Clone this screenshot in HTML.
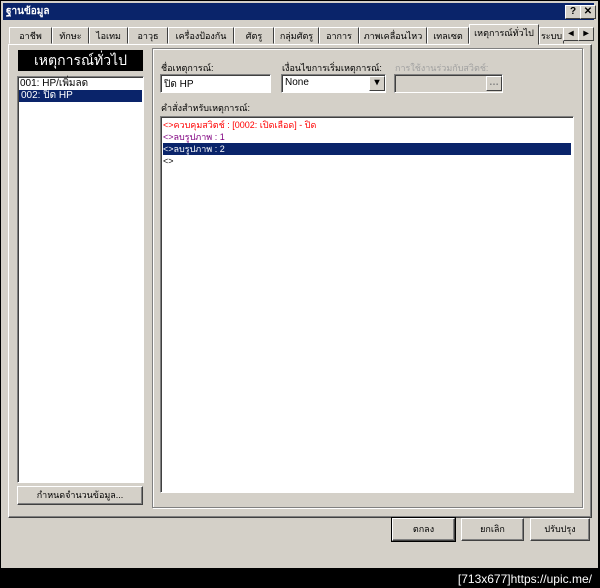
<!DOCTYPE html><html><head><style>
body{margin:0;width:600px;height:588px;background:#000;font-family:Tahoma,"Liberation Sans",sans-serif;font-size:11px;position:relative;overflow:hidden}
.a{position:absolute}
.win{left:1px;top:1px;width:597px;height:567px;background:#d4d0c8}
.title{left:3px;top:3px;width:591px;height:17px;background:#0a246a;color:#fff;font-weight:bold;line-height:17px;font-size:10px;padding-left:3px;box-sizing:border-box}
.tb{width:14px;height:12px;background:#d4d0c8;border:1px solid;border-color:#fff #404040 #404040 #fff;color:#000;font-size:10px;line-height:12px;text-align:center;font-weight:bold}
.tab{top:27px;height:17px;border:1px solid;border-color:#fff #404040 transparent #fff;line-height:17px;font-size:9px;text-align:center;box-sizing:border-box}
.raised{border:1px solid;border-color:#fff #404040 #404040 #fff;box-shadow:inset -1px -1px #808080}
.sunk{background:#fff;border:1px solid;border-color:#808080 #fff #fff #808080;box-shadow:inset 1px 1px #404040;box-sizing:border-box}
.grp{border:1px solid #808080;box-shadow:1px 1px #fff, inset 1px 1px #fff;box-sizing:border-box}
.btn{background:#d4d0c8;text-align:center;box-sizing:border-box;font-size:9px}
</style></head><body>
<div class="a win"></div>
<div class="a title">ฐานข้อมูล</div>
<div class="a tb" style="left:565px;top:5px">?</div>
<div class="a tb" style="left:580px;top:5px">✕</div>
<div class="a raised" style="left:8px;top:44px;width:584px;height:474px;box-sizing:border-box"></div>
<div class="a tab" style="left:9px;width:43px">อาชีพ</div>
<div class="a tab" style="left:52px;width:37px">ทักษะ</div>
<div class="a tab" style="left:89px;width:39px">ไอเทม</div>
<div class="a tab" style="left:128px;width:40px">อาวุธ</div>
<div class="a tab" style="left:168px;width:66px">เครื่องป้องกัน</div>
<div class="a tab" style="left:234px;width:40px">ศัตรู</div>
<div class="a tab" style="left:274px;width:45px">กลุ่มศัตรู</div>
<div class="a tab" style="left:319px;width:40px">อาการ</div>
<div class="a tab" style="left:359px;width:68px">ภาพเคลื่อนไหว</div>
<div class="a tab" style="left:427px;width:42px">เทลเซต</div>
<div class="a tab" style="left:469px;top:24px;height:21px;width:70px;background:#d4d0c8">เหตุการณ์ทั่วไป</div>
<div class="a tab" style="left:539px;width:25px;overflow:hidden">ระบบ</div>
<div class="a tb" style="left:563px;top:27px">◂</div>
<div class="a tb" style="left:578px;top:27px">▸</div>
<div class="a" style="left:18px;top:50px;width:125px;height:21px;background:#000;color:#fff;font-size:14px;text-align:center;line-height:21px">เหตุการณ์ทั่วไป</div>
<div class="a sunk" style="left:17px;top:76px;width:127px;height:407px">
<div style="padding:1px 2px;height:11px;line-height:11px;font-size:10px">001: HP/เพิ่มลด</div>
<div style="margin:0 1px;padding:0 2px;height:12px;line-height:12px;background:#0a246a;color:#fff;font-size:10px">002: ปิด HP</div></div>
<div class="a raised btn" style="left:17px;top:486px;width:126px;height:19px;line-height:17px">กำหนดจำนวนข้อมูล...</div>
<div class="a grp" style="left:152px;top:48px;width:431px;height:460px"></div>
<div class="a" style="left:161px;top:61px;font-size:9px">ชื่อเหตุการณ์:</div>
<div class="a sunk" style="left:160px;top:74px;width:111px;height:19px;padding:2px 3px;font-size:10px">ปิด HP</div>
<div class="a" style="left:282px;top:61px;font-size:9px">เงื่อนไขการเริ่มเหตุการณ์:</div>
<div class="a sunk" style="left:281px;top:74px;width:105px;height:19px;padding:2px 3px;font-size:10px">None</div>
<div class="a tb" style="left:369px;top:76px;height:13px">▾</div>
<div class="a" style="left:395px;top:61px;font-size:9px;color:#a0a0a0">การใช้งานร่วมกับสวิตช์:</div>
<div class="a sunk" style="left:394px;top:74px;width:109px;height:19px;background:#d4d0c8"></div>
<div class="a tb" style="left:486px;top:76px;height:13px;color:#808080">…</div>
<div class="a" style="left:161px;top:101px;font-size:9px">คำสั่งสำหรับเหตุการณ์:</div>
<div class="a sunk" style="left:160px;top:116px;width:414px;height:377px;padding:2px 2px;line-height:12px;font-size:9px">
<div style="color:#f00">&lt;&gt;ควบคุมสวิตช์ : [0002: เปิดเลือด] - ปิด</div>
<div style="color:#800080">&lt;&gt;ลบรูปภาพ : 1</div>
<div style="background:#0a246a;color:#fff">&lt;&gt;ลบรูปภาพ : 2</div>
<div>&lt;&gt;</div></div>
<div class="a raised btn" style="left:392px;top:518px;width:63px;height:23px;line-height:21px;outline:1px solid #000">ตกลง</div>
<div class="a raised btn" style="left:461px;top:518px;width:63px;height:23px;line-height:21px">ยกเลิก</div>
<div class="a raised btn" style="left:530px;top:518px;width:60px;height:23px;line-height:21px">ปรับปรุง</div>
<div class="a" style="right:8px;top:572px;color:#fff;font-family:'Liberation Sans',sans-serif;font-size:12px">[713x677]https://upic.me/</div>
</body></html>
